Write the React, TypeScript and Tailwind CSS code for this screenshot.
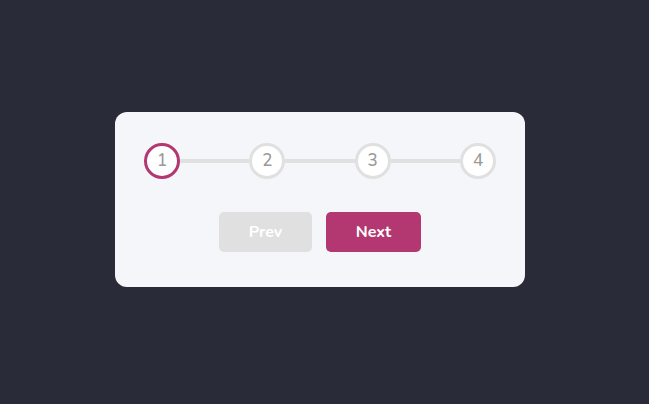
export default function App() {
  const steps = [1, 2, 3, 4];
  return (
    <main
      className="flex h-[404px] w-full items-center justify-center bg-[#2a2b38] pr-[9px] pb-[5px]"
      style={{ fontFamily: '"Nunito", "Lato", "Open Sans", sans-serif' }}
    >
      <div className="flex w-[410px] flex-col items-center gap-[33px] rounded-xl bg-[#f5f6fa] px-[29px] pt-[31px] pb-[35px]">
        <div className="flex w-full items-center">
          {steps.map((s, i) => (
            <div key={s} className={`flex items-center ${i > 0 ? "flex-1" : ""}`}>
              {i > 0 && <div className="h-1 flex-1 bg-[#e0e0e0]" />}
              <div
                className={`flex h-9 w-9 items-center justify-center rounded-full border-[3px] bg-white text-[17px] font-medium text-[#999] ${
                  i === 0 ? "border-[#b33771]" : "border-[#e0e0e0]"
                }`}
              >
                {s}
              </div>
            </div>
          ))}
        </div>
        <div className="flex gap-[14px]">
          <button className="h-10 w-[93px] rounded-[5px] bg-[#e0e0e0] text-[16px] font-bold text-white">
            Prev
          </button>
          <button className="h-10 w-[95px] rounded-[5px] bg-[#b33771] text-[16px] font-bold text-white">
            Next
          </button>
        </div>
      </div>
    </main>
  );
}
